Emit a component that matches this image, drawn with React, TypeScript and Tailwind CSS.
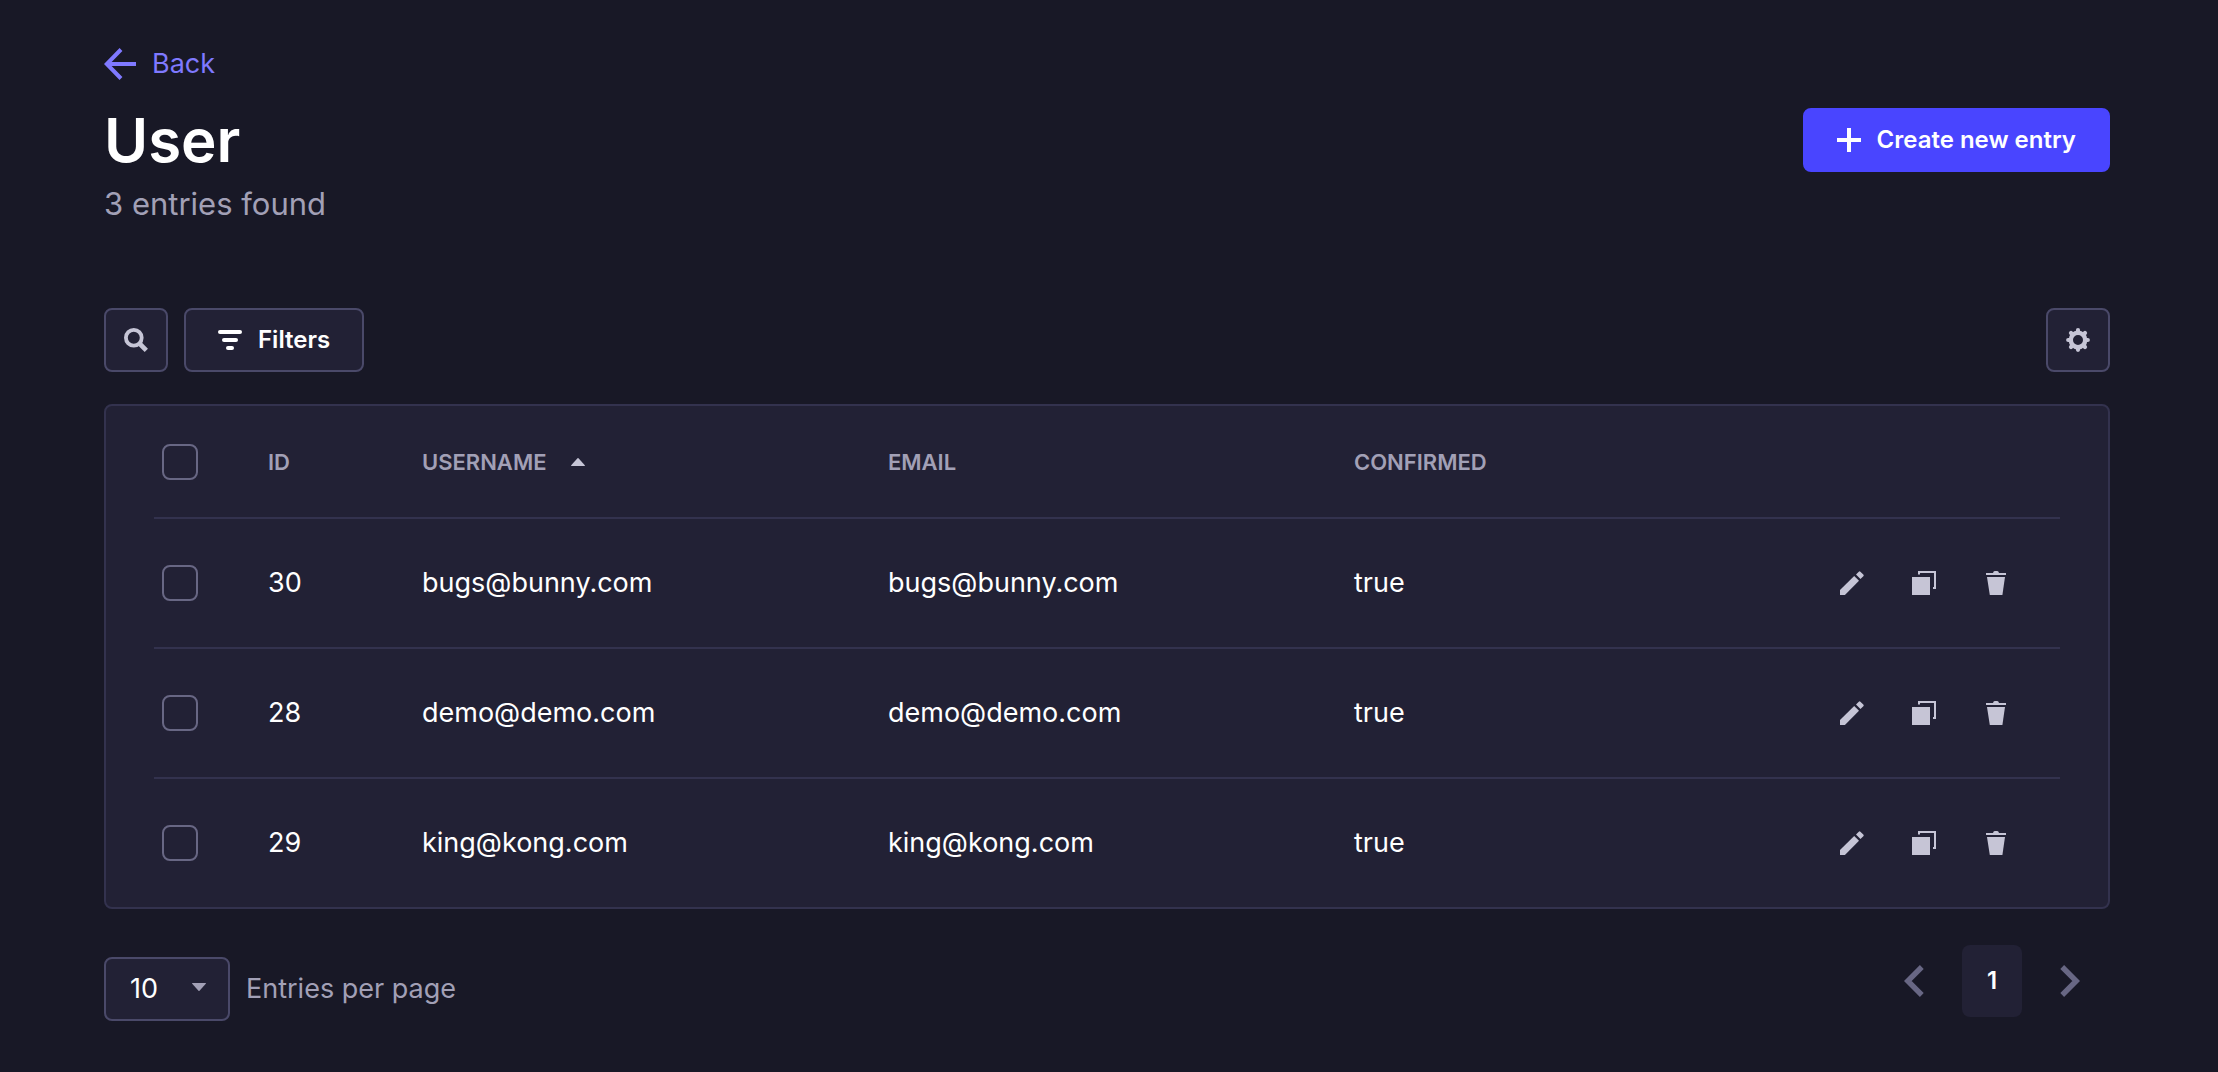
import React, { useState } from 'react';

interface User {
    id: number;
    username: string;
    email: string;
    confirmed: boolean;
}

const users: User[] = [
    { id: 30, username: 'bugs@bunny.com', email: 'bugs@bunny.com', confirmed: true },
    { id: 28, username: 'demo@demo.com', email: 'demo@demo.com', confirmed: true },
    { id: 29, username: 'king@kong.com', email: 'king@kong.com', confirmed: true },
];

const ArrowLeftIcon = () => (
    <svg className="size-8" viewBox="0 0 32 32" fill="none" stroke="currentColor" aria-hidden="true">
        <path d="M17 1.5 2.8 16 17 30.5" strokeWidth="4" />
        <path d="M3 16h29" strokeWidth="4" />
    </svg>
);

const PlusIcon = () => (
    <svg className="size-6" viewBox="0 0 24 24" fill="currentColor" aria-hidden="true">
        <path d="M10 0h4v10h10v4H14v10h-4V14H0v-4h10z" />
    </svg>
);

const SearchIcon = () => (
    <svg className="size-6" viewBox="0 0 24 24" fill="none" stroke="currentColor" aria-hidden="true">
        <circle cx="9.8" cy="9.8" r="7.9" strokeWidth="3.8" />
        <path d="m15 15 7.3 7.3" strokeWidth="4.6" />
    </svg>
);

const FilterIcon = () => (
    <svg className="size-6" viewBox="0 0 24 24" fill="currentColor" aria-hidden="true">
        <rect x="0" y="2" width="24" height="4" rx="2" />
        <rect x="4" y="10" width="16" height="4" rx="2" />
        <rect x="8" y="18" width="8" height="4" rx="2" />
    </svg>
);

const CogIcon = () => (
    <svg className="size-6" viewBox="0 0 24 24" fill="none" stroke="currentColor" aria-hidden="true">
        <circle cx="12" cy="12" r="7.2" strokeWidth="4.4" />
        <path
            d="M12 2.2v1.6M12 20.2v1.6M2.2 12h1.6M20.2 12h1.6M5 5l1.2 1.2M17.8 17.8 19 19M5 19l1.2-1.2M17.8 6.2 19 5"
            strokeWidth="4.2"
            strokeLinecap="round"
        />
    </svg>
);

const PencilIcon = () => (
    <svg className="size-6" viewBox="0 0 24 24" fill="currentColor" aria-hidden="true">
        <path d="M0 24v-4.9L14.2 5 19 9.8 4.9 24z" />
        <path d="m16 3.5 2.8-2.8q.8-.8 1.6 0l2.9 2.9q.8.8 0 1.6L20.5 8z" />
    </svg>
);

const DuplicateIcon = () => (
    <svg className="size-6" viewBox="0 0 24 24" fill="currentColor" aria-hidden="true">
        <path d="M0 6h18v18H0z" />
        <path d="M6 0h18v18h-3v-2h1V2H8v1.4H6z" />
    </svg>
);

const TrashIcon = () => (
    <svg className="size-6" viewBox="0 0 24 24" fill="currentColor" aria-hidden="true">
        <path d="M2 2h7q.4-2 1.8-2h2.4Q14.600 0 15 2h7v2H2z" />
        <path d="M3 6h18l-2.6 18H5.800z" />
    </svg>
);

const CaretIcon: React.FC<{ className: string }> = ({ className }) => (
    <svg className={className} viewBox="0 0 14 8" fill="currentColor" aria-hidden="true">
        <path d="M.4 0h13.200q.6.300.2.800L7.500 7.700q-.5.500-1 0L.2.800Q-.2.300.4 0z" />
    </svg>
);

const ChevronIcon: React.FC<{ className?: string }> = ({ className = '' }) => (
    <svg className={`h-8 w-5 ${className}`} viewBox="0 0 20 32" fill="none" stroke="currentColor" aria-hidden="true">
        <path d="M17.800 2 3.800 16l14 14" strokeWidth="5.400" />
    </svg>
);

const Checkbox: React.FC<{ label: string; checked: boolean; onChange: () => void }> = ({ label, checked, onChange }) => (
    <input
        type="checkbox"
        aria-label={label}
        checked={checked}
        onChange={onChange}
        className="block size-9 appearance-none rounded-lg border-2 border-[#686784] checked:border-[#4945ff] checked:bg-[#4945ff]"
    />
);

const IconButton: React.FC<{ label: string; children: React.ReactNode }> = ({ label, children }) => (
    <button
        type="button"
        aria-label={label}
        className="flex size-16 items-center justify-center rounded-lg border-2 border-[#4a4969] bg-[#222135] text-[#c6c5d6]"
    >
        {children}
    </button>
);

const RowAction: React.FC<{ label: string; children: React.ReactNode }> = ({ label, children }) => (
    <button type="button" aria-label={label} className="flex size-16 items-center justify-center text-[#c6c5d6]">
        {children}
    </button>
);

const App: React.FC = () => {
    const [selected, setSelected] = useState<number[]>([]);
    const [pageSize, setPageSize] = useState('10');

    const toggle = (id: number) =>
        setSelected(prev => (prev.includes(id) ? prev.filter(x => x !== id) : [...prev, id]));
    const allSelected = selected.length === users.length;
    const toggleAll = () => setSelected(allSelected ? [] : users.map(u => u.id));

    return (
        <main className="min-h-screen bg-[#181826] pt-12 pr-27 pb-12 pl-26 font-['Inter',sans-serif] text-[27px] leading-10 text-white">
            <header>
                <a href="#" className="flex h-8 w-fit items-center gap-4 text-[#7f79ff]">
                    <ArrowLeftIcon />
                    Back
                </a>
                <div className="mt-5 flex h-20 items-center justify-between">
                    <h1 className="text-[60px] leading-20 font-semibold">User</h1>
                    <button
                        type="button"
                        className="flex h-16 items-center gap-4 rounded-lg border-2 border-[#4945ff] bg-[#4945ff] px-8 text-2xl font-semibold"
                    >
                        <PlusIcon />
                        Create new entry
                    </button>
                </div>
                <p className="text-[31px] leading-12 text-[#a2a0b6]">{users.length} entries found</p>
            </header>

            <div className="mt-20 flex items-center gap-4">
                <IconButton label="Search">
                    <SearchIcon />
                </IconButton>
                <button
                    type="button"
                    className="flex h-16 items-center gap-4 rounded-lg border-2 border-[#4a4969] bg-[#222135] px-8 text-2xl font-semibold"
                >
                    <FilterIcon />
                    Filters
                </button>
                <div className="ml-auto">
                    <IconButton label="Configure the view">
                        <CogIcon />
                    </IconButton>
                </div>
            </div>

            <section className="mt-8 rounded-lg border-2 border-[#33324e] bg-[#222135] px-12">
                <table className="w-full table-fixed border-separate border-spacing-0 text-left">
                    <colgroup>
                        <col className="w-[82px]" />
                        <col className="w-[154px]" />
                        <col />
                        <col />
                        <col />
                        <col className="w-[272px]" />
                    </colgroup>
                    <thead>
                        <tr className="h-[113px] text-[22px] text-[#a2a0b6] uppercase *:border-b-2 *:border-[#33324e] *:font-semibold">
                            <th className="pl-2">
                                <Checkbox label="Select all entries" checked={allSelected} onChange={toggleAll} />
                            </th>
                            <th className="pl-8">ID</th>
                            <th className="pl-8">
                                <span className="flex items-center gap-6">
                                    Username
                                    <button type="button" aria-label="Sort by username" className="text-[#c6c5d6]">
                                        <CaretIcon className="block h-2 w-3.5 rotate-180" />
                                    </button>
                                </span>
                            </th>
                            <th className="pl-8">Email</th>
                            <th className="pl-8">Confirmed</th>
                            <td></td>
                        </tr>
                    </thead>
                    <tbody>
                        {users.map(user => (
                            <tr
                                key={user.id}
                                className="h-[130px] *:border-b-2 *:border-[#33324e] last:h-32 last:*:border-b-0"
                            >
                                <td className="pl-2">
                                    <Checkbox
                                        label={`Select ${user.username}`}
                                        checked={selected.includes(user.id)}
                                        onChange={() => toggle(user.id)}
                                    />
                                </td>
                                <td className="pl-8">{user.id}</td>
                                <td className="pl-8">{user.username}</td>
                                <td className="pl-8">{user.email}</td>
                                <td className="pl-8">{String(user.confirmed)}</td>
                                <td className="pr-8">
                                    <div className="flex justify-end gap-2">
                                        <RowAction label="Edit">
                                            <PencilIcon />
                                        </RowAction>
                                        <RowAction label="Duplicate">
                                            <DuplicateIcon />
                                        </RowAction>
                                        <RowAction label="Delete">
                                            <TrashIcon />
                                        </RowAction>
                                    </div>
                                </td>
                            </tr>
                        ))}
                    </tbody>
                </table>
            </section>

            <footer className="flex items-start justify-between pt-9">
                <div className="mt-3 flex items-center gap-4">
                    <div className="relative">
                        <select
                            id="page-size"
                            value={pageSize}
                            onChange={e => setPageSize(e.target.value)}
                            className="block h-16 w-[126px] appearance-none rounded-lg border-2 border-[#4a4969] bg-[#222135] pl-6"
                        >
                            <option>10</option>
                            <option>20</option>
                            <option>50</option>
                            <option>100</option>
                        </select>
                        <span className="pointer-events-none absolute inset-y-0 right-6 flex items-center pb-1 text-[#a2a0b6]">
                            <CaretIcon className="h-2 w-3.5" />
                        </span>
                    </div>
                    <label htmlFor="page-size" className="text-[#a2a0b6]">
                        Entries per page
                    </label>
                </div>
                <nav aria-label="Pagination" className="flex gap-2">
                    <button
                        type="button"
                        aria-label="Previous page"
                        className="flex h-18 w-20 items-center justify-center text-[#686784]"
                    >
                        <ChevronIcon />
                    </button>
                    <a
                        href="#"
                        aria-current="page"
                        className="flex h-18 w-15 items-center justify-center rounded-lg bg-[#222135] text-2xl font-semibold"
                    >
                        1
                    </a>
                    <button
                        type="button"
                        aria-label="Next page"
                        className="flex h-18 w-20 items-center justify-center text-[#686784]"
                    >
                        <ChevronIcon className="rotate-180" />
                    </button>
                </nav>
            </footer>
        </main>
    );
};

export default App;
